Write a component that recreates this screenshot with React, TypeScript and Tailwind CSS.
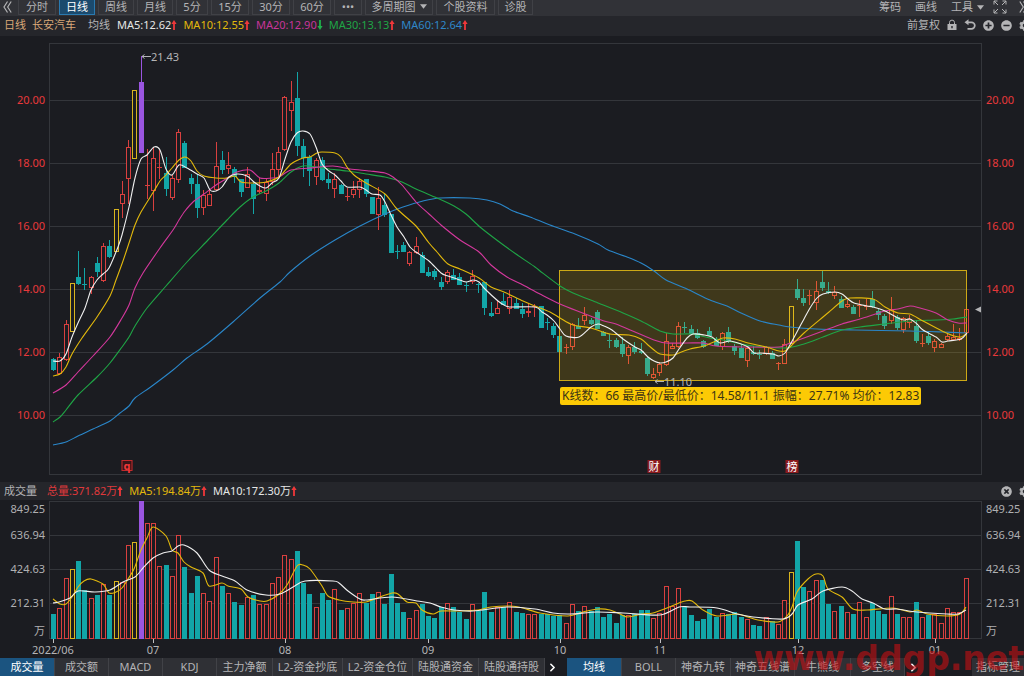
import React, { useState } from 'react';
import { ChevronRight } from 'lucide-react';
import { FaCog, FaMinusCircle, FaPlusCircle, FaTimesCircle } from 'react-icons/fa';

type Kind = 'r' | 'g' | 'y' | 'p';
// kind, high, body top, body bottom, low, volume top
type Bar = [Kind, number, number, number, number, number];

const BARS: Bar[] = [
  ['g', 358, 359, 370, 371, 614], ['r', 353, 357, 374, 375, 608], ['r', 320, 324, 360, 361, 578],
  ['y', 283, 283, 332, 332, 569], ['g', 251, 277, 284, 285, 561], ['g', 268, 284, 285, 290, 590],
  ['r', 276, 277, 288, 294, 598], ['g', 257, 263, 272, 277, 595], ['r', 243, 246, 281, 282, 584],
  ['g', 240, 246, 257, 258, 595], ['y', 209, 209, 252, 252, 581], ['r', 181, 194, 204, 218, 582],
  ['r', 140, 147, 179, 204, 545], ['y', 90, 90, 159, 159, 542], ['p', 56, 82, 153, 153, 501],
  ['r', 149, 185, 185, 199, 523], ['r', 147, 158, 191, 211, 523], ['r', 150, 167, 168, 179, 566],
  ['g', 157, 173, 189, 196, 565], ['r', 175, 178, 198, 200, 576], ['r', 129, 132, 180, 183, 535],
  ['g', 141, 143, 168, 168, 567], ['g', 174, 178, 184, 194, 593], ['g', 174, 184, 208, 218, 576],
  ['r', 190, 195, 208, 215, 593], ['r', 190, 194, 206, 206, 601], ['r', 142, 166, 190, 191, 557],
  ['g', 151, 160, 170, 174, 586], ['r', 152, 165, 169, 174, 593], ['g', 167, 169, 177, 183, 602],
  ['g', 179, 179, 192, 197, 605], ['r', 167, 174, 188, 188, 597], ['g', 182, 184, 199, 214, 595],
  ['r', 178, 190, 192, 194, 604], ['r', 178, 182, 194, 201, 604], ['r', 153, 169, 182, 185, 583],
  ['r', 147, 152, 170, 177, 577], ['r', 96, 97, 150, 151, 555], ['r', 81, 102, 111, 131, 559],
  ['g', 72, 98, 146, 156, 551], ['g', 139, 146, 158, 177, 583], ['g', 155, 157, 171, 186, 594],
  ['r', 158, 160, 177, 185, 607], ['g', 157, 160, 180, 181, 593], ['g', 173, 179, 183, 189, 600],
  ['r', 173, 179, 189, 198, 589], ['g', 184, 185, 194, 194, 610], ['r', 188, 196, 197, 201, 608],
  ['r', 181, 189, 195, 198, 603], ['r', 178, 181, 190, 198, 593], ['g', 179, 179, 194, 197, 603],
  ['g', 197, 197, 214, 214, 594], ['r', 187, 198, 215, 230, 592], ['g', 194, 205, 215, 217, 604],
  ['g', 214, 214, 253, 253, 574], ['g', 245, 251, 252, 259, 603], ['g', 242, 245, 252, 252, 612],
  ['r', 251, 252, 264, 266, 618], ['r', 237, 246, 253, 254, 610], ['g', 252, 255, 273, 273, 604],
  ['g', 267, 272, 276, 277, 616], ['g', 269, 271, 277, 280, 618], ['g', 277, 282, 287, 290, 607],
  ['r', 270, 272, 282, 284, 603], ['g', 269, 275, 280, 280, 607], ['g', 273, 277, 285, 285, 612],
  ['g', 282, 285, 286, 292, 619], ['r', 270, 276, 282, 284, 604], ['g', 283, 284, 285, 293, 611],
  ['g', 282, 282, 308, 315, 592], ['g', 302, 313, 316, 317, 612], ['r', 300, 308, 314, 314, 607],
  ['g', 293, 301, 305, 305, 607], ['r', 290, 297, 309, 314, 602], ['g', 298, 303, 309, 309, 612],
  ['g', 303, 309, 314, 318, 613], ['r', 303, 311, 313, 317, 614], ['r', 304, 306, 307, 317, 614],
  ['g', 306, 306, 328, 328, 614], ['g', 318, 322, 323, 330, 614], ['g', 323, 326, 335, 338, 616],
  ['g', 336, 336, 352, 352, 615], ['r', 344, 347, 348, 354, 623], ['r', 323, 324, 347, 350, 604],
  ['g', 318, 326, 329, 329, 611], ['r', 307, 315, 321, 325, 606], ['g', 318, 320, 324, 325, 611],
  ['g', 310, 312, 329, 329, 607], ['g', 331, 332, 336, 336, 617], ['g', 334, 340, 341, 348, 614],
  ['g', 338, 340, 347, 348, 623], ['g', 337, 344, 354, 357, 615], ['r', 345, 347, 356, 364, 615],
  ['g', 342, 347, 352, 354, 614], ['g', 343, 351, 353, 354, 610], ['g', 357, 358, 374, 376, 610],
  ['r', 368, 374, 378, 379, 618], ['r', 362, 364, 373, 376, 613], ['r', 333, 341, 365, 366, 586],
  ['r', 343, 346, 349, 349, 606], ['r', 322, 326, 347, 348, 588], ['g', 322, 327, 328, 333, 607],
  ['g', 325, 329, 334, 335, 615], ['g', 329, 333, 338, 339, 621], ['g', 340, 341, 347, 348, 619],
  ['g', 327, 331, 336, 336, 609], ['g', 337, 339, 346, 346, 617], ['r', 332, 333, 347, 350, 613],
  ['g', 327, 332, 342, 343, 614], ['g', 344, 346, 351, 355, 612], ['g', 345, 348, 358, 358, 617],
  ['r', 347, 348, 361, 367, 619], ['g', 346, 352, 354, 355, 625], ['g', 350, 354, 355, 359, 626],
  ['r', 346, 347, 354, 355, 617], ['g', 351, 353, 359, 359, 621], ['r', 362, 363, 364, 370, 624],
  ['r', 339, 344, 364, 364, 600], ['y', 306, 306, 344, 344, 572], ['g', 279, 289, 298, 300, 541],
  ['g', 289, 298, 303, 306, 587], ['r', 290, 295, 296, 305, 591], ['r', 281, 291, 303, 310, 580],
  ['g', 270, 282, 288, 291, 580], ['g', 282, 291, 293, 294, 604], ['r', 286, 292, 296, 299, 611],
  ['g', 296, 299, 308, 308, 606], ['r', 300, 304, 307, 308, 612], ['g', 305, 307, 314, 314, 614],
  ['r', 300, 305, 306, 317, 602], ['r', 299, 306, 307, 310, 617], ['g', 291, 299, 307, 308, 603],
  ['g', 309, 311, 315, 320, 611], ['g', 314, 316, 326, 329, 614], ['r', 297, 309, 321, 324, 596],
  ['g', 315, 317, 328, 330, 614], ['r', 317, 318, 330, 333, 617], ['r', 315, 319, 323, 328, 617],
  ['g', 320, 326, 341, 343, 602], ['r', 334, 343, 344, 347, 617], ['g', 332, 336, 343, 345, 615],
  ['r', 339, 341, 348, 352, 614], ['r', 343, 344, 348, 348, 623], ['r', 334, 336, 340, 341, 608],
  ['r', 324, 337, 340, 341, 612], ['r', 328, 338, 340, 341, 612], ['r', 308, 309, 333, 338, 578],
];

const COLORS: Record<Kind, string> = { r: '#d9403f', g: '#12a5a7', y: '#d9b41f', p: '#9a55e0' };

const PRICE_LINES = [
  { color: '#2a86c9', points: '53,445 66,442 78,436 93,429 110,421 120,413 129,406 135,398 152,386 173,370 187,358 207,344 233,322 260,298 280,282 290,272 310,256 335,240 360,226 385,214 403,207 423,201 440,198 470,198 487,200 500,204 513,211 530,217 550,225 575,234 598,244 608,250 627,257 641,263 654,271 666,280 687,289 710,300 727,306 741,313 760,321 779,325 790,327 817,329 854,330 910,331 942,332 967,333' },
  { color: '#1fa546', points: '53,422 60,417 66,410 78,395 97,377 110,363 122,347 129,337 135,326 147,308 166,286 187,262 208,240 227,220 240,207 253,197 266,191 279,183 291,172 303,166 316,167 329,169 347,171 366,174 385,177 402,182 416,189 437,198 454,206 466,214 480,227 498,241 516,254 535,267 540,271 560,286 573,293 598,303 623,313 641,321 660,331 673,334 691,334 710,338 723,340 741,344 754,346 785,348 804,344 823,337 842,330 860,327 885,324 910,321 936,320 953,319 967,317' },
  { color: '#d4389d', points: '53,393 66,385 78,372 93,356 110,337 122,318 129,305 135,288 143,273 160,248 173,230 179,220 185,211 193,202 204,194 216,185 229,177 237,172 250,170 260,178 272,178 279,177 291,170 310,168 333,166 350,169 370,171 385,173 393,177 402,185 416,202 429,214 441,225 460,240 479,252 491,265 507,277 523,285 540,294 560,304 580,312 604,321 616,324 635,332 654,340 666,343 687,343 704,343 716,346 748,347 779,347 785,345 804,338 823,331 842,324 860,319 885,311 898,309 910,306 920,308 936,313 948,320 958,323 967,323' },
  { color: '#e3b90c', points: '53,376 60,374 66,367 72,354 82,338 97,317 110,296 116,280 123,261 130,240 135,225 141,212 154,191 160,181 166,175 172,168 179,160 185,157 191,161 197,171 204,176 216,178 227,178 235,176 241,182 254,183 266,182 279,177 291,164 303,158 310,157 317,153 322,152 335,153 341,157 347,167 354,175 366,183 385,194 397,209 416,226 429,243 437,252 448,264 460,269 479,278 491,287 504,292 523,301 535,306 550,312 560,318 573,325 591,328 610,334 629,335 641,339 648,345 654,350 660,354 673,355 679,353 690,349 704,346 716,341 723,338 735,339 748,343 766,347 779,351 785,351 791,346 804,333 823,317 829,312 842,301 850,298 873,299 885,307 898,313 910,314 923,321 942,331 954,336 961,337 967,333' },
  { color: '#f0f0f0', points: '53,361 60,361 66,354 72,337 78,323 85,308 91,290 97,280 103,274 109,268 118,247 122,235 129,207 135,178 141,159 147,155 154,147 160,150 166,169 172,175 179,165 187,168 197,174 204,178 210,190 216,191 222,187 229,177 237,174 247,176 254,182 260,186 266,188 272,183 279,178 285,159 291,142 297,133 303,131 310,134 316,147 322,164 329,171 335,175 341,181 347,187 360,187 366,190 372,194 380,195 385,202 391,215 397,227 404,237 410,247 416,252 429,261 441,273 448,276 457,279 466,282 473,280 479,282 485,289 498,301 504,305 510,307 535,307 542,312 547,315 554,321 560,329 566,336 579,337 591,327 598,324 604,326 612,330 623,339 635,347 641,350 648,357 654,361 660,363 666,362 673,358 679,349 687,338 693,334 704,335 712,337 720,343 730,341 741,344 748,347 754,353 760,353 773,354 779,356 785,353 791,343 798,330 804,319 810,308 817,298 823,294 835,292 842,294 848,299 854,303 867,306 873,307 885,311 898,318 904,320 910,319 917,324 923,330 936,337 942,342 948,341 961,339 967,333' },
];

const VOLUME_LINES = [
  { color: '#e3b90c', points: '53,599 60,604 66,604 72,597 78,587 84,581 91,579 103,584 109,593 116,592 122,588 128,579 134,569 141,550 147,538 153,527 166,536 172,550 178,553 184,562 191,567 203,573 209,586 222,583 228,586 241,589 248,597 260,601 267,601 278,595 287,585 297,566 303,565 310,569 322,586 328,596 339,600 353,602 366,602 377,598 392,593 398,594 407,602 416,603 422,610 433,614 441,611 460,611 478,610 491,607 510,606 523,608 540,613 568,616 583,612 598,609 610,610 620,614 628,617 642,614 653,613 667,608 679,603 685,601 692,601 703,610 717,616 737,614 748,617 758,620 778,622 787,616 792,607 797,592 808,579 816,574 823,576 828,589 842,597 853,609 867,610 893,608 910,612 917,610 927,614 947,616 960,614 966,607' },
  { color: '#f0f0f0', points: '53,603 59,602 70,598 78,591 95,592 110,590 123,582 135,577 143,568 153,558 163,553 172,551 178,546 184,545 197,553 209,570 222,576 235,581 247,590 266,595 280,594 293,587 305,581 333,581 339,583 348,591 360,599 366,600 392,597 417,601 430,603 441,607 454,610 473,611 507,607 535,609 553,613 570,614 597,612 623,613 660,615 679,607 690,607 717,608 737,614 753,617 783,619 792,614 798,605 812,599 823,591 842,587 852,591 862,599 873,603 885,609 897,609 917,612 947,614 958,614 966,610' },
];

const PERIODS = [
  { label: '分时', width: 'w-[38px]' },
  { label: '日线', width: 'w-[36px]' },
  { label: '周线', width: 'w-[36px]' },
  { label: '月线', width: 'w-[36px]' },
  { label: '5分', width: 'w-[32px]' },
  { label: '15分', width: 'w-[38px]' },
  { label: '30分', width: 'w-[38px]' },
  { label: '60分', width: 'w-[38px]' },
  { label: '•••', width: 'w-[28px]' },
  { label: '多周期图', width: 'w-[68px]', caret: true },
  { label: '个股资料', width: 'w-[59px]' },
  { label: '诊股', width: 'w-[35px]' },
];

const AVERAGES = [
  { text: 'MA5:12.62', color: 'text-[#e6e6e6]', up: true },
  { text: 'MA10:12.55', color: 'text-[#e3b90c]', up: true },
  { text: 'MA20:12.90', color: 'text-[#c8359a]', up: false },
  { text: 'MA30:13.13', color: 'text-[#1fa546]', up: true },
  { text: 'MA60:12.64', color: 'text-[#2f86c8]', up: true },
];

const VOLUME_AVERAGES = [
  { text: '总量:371.82万', color: 'text-[#e0393b]' },
  { text: 'MA5:194.84万', color: 'text-[#e3b90c]' },
  { text: 'MA10:172.30万', color: 'text-[#e6e6e6]' },
];

const PRICES = ['20.00', '18.00', '16.00', '14.00', '12.00', '10.00'];

const MONTHS = [
  { label: '2022/06', x: 53 },
  { label: '07', x: 153 },
  { label: '08', x: 285 },
  { label: '09', x: 428 },
  { label: '10', x: 560 },
  { label: '11', x: 660 },
  { label: '12', x: 798 },
  { label: '01', x: 935 },
];

const INDICATORS = [
  { label: '成交量', width: 'w-[55px]' },
  { label: '成交额', width: 'w-[54px]' },
  { label: 'MACD', width: 'w-[54px]' },
  { label: 'KDJ', width: 'w-[54px]' },
  { label: '主力净额', width: 'w-[56px]' },
  { label: 'L2-资金抄底', width: 'w-[70px]' },
  { label: 'L2-资金仓位', width: 'w-[70px]' },
  { label: '陆股通资金', width: 'w-[66px]' },
  { label: '陆股通持股', width: 'w-[66px]' },
];

const OVERLAYS = [
  { label: '均线', width: 'w-[55px]' },
  { label: 'BOLL', width: 'w-[54px]' },
  { label: '神奇九转', width: 'w-[55px]' },
  { label: '神奇五线谱', width: 'w-[64px]' },
  { label: '牛熊线', width: 'w-[56px]' },
  { label: '多空线', width: 'w-[54px]' },
];

const barX = (i: number) => Math.round(53 + 6.25 * i);
const left = (x: number) => ({ left: `${((x - 49) / 933) * 100}%` });

// Catmull-Rom through the points, written out as cubic segments
const smoothPath = (points: string) => {
  const pts = points.split(' ').map(p => p.split(',').map(Number));
  let d = `M${pts[0][0]} ${pts[0][1]}`;
  for (let i = 0; i < pts.length - 1; i++) {
    const a = pts[Math.max(i - 1, 0)];
    const b = pts[i];
    const c = pts[i + 1];
    const e = pts[Math.min(i + 2, pts.length - 1)];
    d += ` C${b[0] + (c[0] - a[0]) / 7} ${b[1] + (c[1] - a[1]) / 7} ${c[0] - (e[0] - b[0]) / 7} ${c[1] - (e[1] - b[1]) / 7} ${c[0]} ${c[1]}`;
  }
  return d;
};

const TrendArrow = ({ up }: { up: boolean }) => (
  <svg viewBox="0 0 6 10" className={`h-[10px] w-[6px] ${up ? 'text-[#f0383a]' : 'rotate-180 text-[#1fb04a]'}`}>
    <path d="M3 0 L5.6 4 H3.9 V10 H2.1 V4 H0.4 Z" fill="currentColor" />
  </svg>
);

const Caret = () => (
  <svg viewBox="0 0 8 5" className="h-[5px] w-[7px]">
    <path d="M0 0 H8 L4 5 Z" fill="currentColor" />
  </svg>
);

const DoubleChevron = ({ flip = false }: { flip?: boolean }) => (
  <svg viewBox="0 0 9 12" className={`h-[12px] w-[9px] ${flip ? 'rotate-180' : ''}`} fill="none" stroke="currentColor" strokeWidth="1.2">
    <path d="M4.5 0.5 L1 6 L4.5 11.5 M8.2 0.5 L4.7 6 L8.2 11.5" />
  </svg>
);

const LineSet = ({ lines }: { lines: { color: string; points: string }[] }) => (
  <g fill="none" strokeWidth="1.1" strokeLinejoin="round">
    {lines.map(line => (
      <path key={line.color} d={smoothPath(line.points)} stroke={line.color} vectorEffect="non-scaling-stroke" />
    ))}
  </g>
);

const PricePlot = () => (
  <svg viewBox="49 36 933 446" preserveAspectRatio="none" className="block h-[446px] w-full">
    <g stroke="#34363b" shapeRendering="crispEdges">
      {[43, 100, 163, 226, 289, 352, 415, 474].map(y => (
        <line key={y} x1="49" x2="982" y1={y + 0.5} y2={y + 0.5} />
      ))}
      <line x1="49.5" x2="49.5" y1="43" y2="474" />
      <line x1="981.5" x2="981.5" y1="43" y2="474" />
    </g>
    {BARS.map(([kind, high, top, bottom, low], i) => {
      const x = barX(i);
      const solid = kind === 'g' || kind === 'p';
      return (
        <g key={i} stroke={COLORS[kind]} fill={solid ? COLORS[kind] : '#1b1c21'}>
          <line x1={x + 0.5} x2={x + 0.5} y1={high} y2={low} />
          {bottom - top > 1 ? (
            <rect x={x - 1.5} y={top + 0.5} width="4" height={bottom - top - 1} />
          ) : (
            <line x1={x - 2} x2={x + 3} y1={top + 0.5} y2={top + 0.5} />
          )}
        </g>
      );
    })}
    <rect x="559.5" y="270.5" width="407" height="110" fill="#ffd000" fillOpacity="0.16" stroke="#cda916" />
    <LineSet lines={PRICE_LINES} />
    <g fill="none" stroke="#b4b4b6">
      <path d="M142 56.5 H151 M144.5 54.5 L142 56.5 L144.5 58.5" />
      <path d="M655 381.5 H664 M657.5 379.5 L655 381.5 L657.5 383.5" />
    </g>
    <path d="M975 309.5 L981 306.5 V312.5 Z" fill="#b4b4b6" />
  </svg>
);

const VolumePlot = () => (
  <svg viewBox="49 500 933 143" preserveAspectRatio="none" className="block h-[143px] w-full">
    <g stroke="#34363b" shapeRendering="crispEdges">
      {[501, 535, 569, 603, 638].map(y => (
        <line key={y} x1="49" x2="982" y1={y + 0.5} y2={y + 0.5} />
      ))}
      <line x1="49.5" x2="49.5" y1="501" y2="639" />
      <line x1="981.5" x2="981.5" y1="501" y2="639" />
    </g>
    {BARS.map(([kind, , , , , top], i) => (
      <rect
        key={i}
        x={barX(i) - 1.5}
        y={top + 0.5}
        width="4"
        height={638 - top}
        stroke={COLORS[kind]}
        fill={kind === 'g' || kind === 'p' ? COLORS[kind] : '#1b1c21'}
      />
    ))}
    <LineSet lines={VOLUME_LINES} />
    <g stroke="#c0c0c2">
      {MONTHS.map(month => (
        <line key={month.label} x1={month.x + 0.5} x2={month.x + 0.5} y1="639" y2="643" />
      ))}
    </g>
  </svg>
);

const PriceAxis = ({ className }: { className: string }) => (
  <div className={`flex shrink-0 flex-col pt-8 text-[#e8393b] ${className}`}>
    {PRICES.map(price => (
      <span key={price} className="flex h-[63px] items-center">{price}</span>
    ))}
  </div>
);

const VolumeAxis = ({ className }: { className: string }) => (
  <div className={`flex shrink-0 flex-col text-[#b0b0b2] ${className}`}>
    <span className="flex h-[18px] items-center">849.25</span>
    <span className="flex h-[34px] items-center">636.94</span>
    <span className="flex h-[34px] items-center">424.63</span>
    <span className="flex h-[34px] items-center">212.31</span>
    <span className="flex h-[22px] items-center">万</span>
  </div>
);

interface TabsProps {
  items: { label: string; width: string }[];
  active: string;
  onSelect: (label: string) => void;
}

const TabStrip: React.FC<TabsProps> = ({ items, active, onSelect }) => (
  <div className="flex">
    {items.map(item => (
      <button
        key={item.label}
        onClick={() => onSelect(item.label)}
        className={`flex shrink-0 items-center justify-center border-r border-[#414247] whitespace-nowrap ${item.width} ${
          active === item.label ? 'bg-[#1b5480] text-white' : 'bg-[#2f3035] text-[#b4b4b6]'
        }`}
      >
        {item.label}
      </button>
    ))}
  </div>
);

const App: React.FC = () => {
  const [period, setPeriod] = useState('日线');
  const [indicator, setIndicator] = useState('成交量');
  const [overlay, setOverlay] = useState('均线');

  return (
    <div className="relative flex w-full flex-col overflow-hidden bg-[#1b1c21] font-['Noto_Sans','Noto_Sans_CJK_SC',sans-serif] text-[11px] leading-[14px] text-[#b4b4b6]">
      <header className="flex h-4 items-center justify-between overflow-hidden bg-[#313237] pb-[2px]">
        <div className="flex items-center gap-[3px]">
          <button aria-label="收起" className="flex w-[15px] justify-center">
            <DoubleChevron />
          </button>
          {PERIODS.map(item => (
            <button
              key={item.label}
              onClick={() => setPeriod(item.label)}
              className={`flex h-[15px] shrink-0 items-center justify-center gap-1 border border-t-0 whitespace-nowrap ${item.width} ${
                period === item.label ? 'border-[#2a7ab0] bg-[#1b4a6d] text-white' : 'border-[#404146]'
              }`}
            >
              {item.label}
              {item.caret && <Caret />}
            </button>
          ))}
        </div>
        <div className="flex shrink-0 items-center">
          <button className="mr-[14px]">筹码</button>
          <button className="mr-[14px]">画线</button>
          <button className="mr-[9px] flex items-center gap-1">工具 <Caret /></button>
          <button aria-label="全屏" className="mr-3">
            <svg viewBox="0 0 14 14" className="h-[14px] w-[14px]" fill="none" stroke="currentColor">
              <path d="M1 4.5 V1 H4.5 M1 1 L5 5 M9.5 1 H13 V4.5 M13 1 L9 5 M1 9.5 V13 H4.5 M1 13 L5 9 M9.5 13 H13 V9.5 M13 13 L9 9" />
            </svg>
          </button>
          <button aria-label="展开" className="-mr-1">
            <DoubleChevron flip />
          </button>
        </div>
      </header>

      <div className="flex h-5 items-center justify-between overflow-hidden bg-[#25262b] pb-[2px] pl-1">
        <div className="flex items-center whitespace-nowrap">
          <span className="mr-[6px] text-[#d9a878]">日线</span>
          <span className="mr-3 text-[#d9a878]">长安汽车</span>
          <span className="mr-[7px]">均线</span>
          {AVERAGES.map(avg => (
            <span key={avg.text} className={`mr-[6px] flex items-center ${avg.color}`}>
              {avg.text}
              <TrendArrow up={avg.up} />
            </span>
          ))}
        </div>
        <div className="-mr-[6px] flex shrink-0 items-center gap-[7px]">
          <button>前复权</button>
          <button aria-label="锁定">
            <svg viewBox="0 0 10 12" className="h-[12px] w-[10px]">
              <path d="M2.5 6 V3.6 A2.5 2.5 0 0 1 7.5 3.6 V5" fill="none" stroke="currentColor" />
              <path fillRule="evenodd" d="M0.5 5 H9.5 V11 H0.5 Z M4.3 7 V9.3 H5.7 V7 Z" fill="currentColor" />
            </svg>
          </button>
          <button aria-label="撤销">
            <svg viewBox="0 0 12 12" className="h-[12px] w-[12px]">
              <path d="M3 3.3 H7.5 A3.3 3.3 0 0 1 7.5 9.9 H3.5" fill="none" stroke="currentColor" strokeWidth="1.7" />
              <path d="M0.5 3.3 L4.5 0.3 V6.3 Z" fill="currentColor" />
            </svg>
          </button>
          <button aria-label="放大"><FaPlusCircle size={11} /></button>
          <button aria-label="缩小"><FaMinusCircle size={11} /></button>
          <button aria-label="设置"><FaCog size={11} /></button>
        </div>
      </div>

      <main>
        <section className="flex">
          <PriceAxis className="w-[49px] items-end pr-1" />
          <div className="relative min-w-0 flex-1">
            <PricePlot />
            <span className="absolute top-[14px]" style={left(151)}>21.43</span>
            <span className="absolute top-[339px]" style={left(664)}>11.10</span>
            <div
              className="absolute top-[351px] rounded-[2px] bg-[#fcca05] px-[2px] text-[12px] leading-[18px] whitespace-nowrap text-[#3c3414]"
              style={left(560)}
            >
              K线数：66 最高价/最低价：14.58/11.1 振幅：27.71% 均价：12.83
            </div>
            <span
              className="absolute top-[424px] flex h-[11px] w-[11px] -translate-x-1/2 items-center justify-center border border-[#c22a2c] bg-[#3a1518] leading-[10px] font-bold text-[#f0383a]"
              style={left(127)}
            >
              q
            </span>
            {[{ label: '财', x: 654 }, { label: '榜', x: 792 }].map(note => (
              <span
                key={note.label}
                className="absolute top-[424px] flex h-[13px] w-[13px] -translate-x-1/2 items-center justify-center bg-[#8a1a1e] text-white"
                style={left(note.x)}
              >
                {note.label}
              </span>
            ))}
          </div>
          <PriceAxis className="w-[42px] items-start pl-1" />
        </section>

        <div className="flex h-[18px] items-center justify-between overflow-hidden bg-[#25262b] pl-1">
          <div className="flex items-center whitespace-nowrap">
            <span className="mr-[10px]">成交量</span>
            {VOLUME_AVERAGES.map(avg => (
              <span key={avg.text} className={`mr-[6px] flex items-center ${avg.color}`}>
                {avg.text}
                <TrendArrow up />
              </span>
            ))}
          </div>
          <div className="-mr-[6px] flex items-center gap-[7px]">
            <button aria-label="关闭"><FaTimesCircle size={11} /></button>
            <button aria-label="设置"><FaCog size={11} /></button>
          </div>
        </div>

        <section className="flex">
          <VolumeAxis className="w-[49px] items-end pr-1" />
          <div className="relative min-w-0 flex-1">
            <VolumePlot />
            <div className="h-[15px]">
              {MONTHS.map(month => (
                <span key={month.label} className="absolute bottom-px -translate-x-1/2" style={left(month.x)}>
                  {month.label}
                </span>
              ))}
            </div>
          </div>
          <VolumeAxis className="w-[42px] items-start pl-1" />
        </section>
      </main>

      <footer className="flex h-[18px] items-stretch">
        <TabStrip items={INDICATORS} active={indicator} onSelect={setIndicator} />
        <button aria-label="更多指标" className="flex w-[22px] shrink-0 items-center pl-px text-white">
          <ChevronRight size={13} strokeWidth={3} />
        </button>
        <TabStrip items={OVERLAYS} active={overlay} onSelect={setOverlay} />
        <button aria-label="更多均线" className="flex w-4 shrink-0 items-center justify-center text-white">
          <ChevronRight size={13} strokeWidth={3} />
        </button>
        <button className="ml-auto shrink-0 bg-[#2f3035] px-1">指标管理</button>
      </footer>

      <div className="pointer-events-none absolute right-0 bottom-0 font-['DejaVu_Sans',sans-serif] text-[33px] leading-[34px] font-bold text-[#c80f12]/60">
        www.ddgp.net
      </div>
    </div>
  );
};

export default App;
